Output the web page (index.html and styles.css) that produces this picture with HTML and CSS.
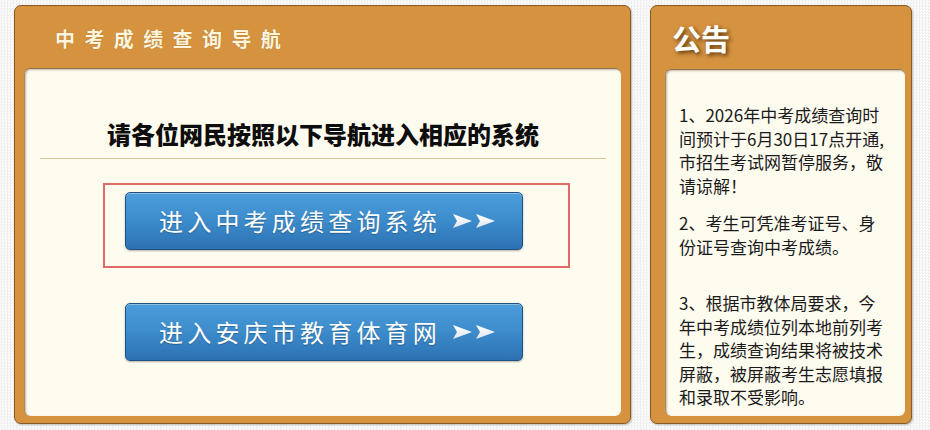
FILE: index.html
```html
<!DOCTYPE html>
<html lang="zh-CN">
<head>
<meta charset="utf-8">
<title>中考成绩查询导航</title>
<link rel="stylesheet" href="styles.css">
</head>
<body>
<div class="wrap">
  <section class="panel nav">
    <div class="nav-head"><h1 class="nav-title">中考成绩查询导航</h1></div>
    <div class="inner nav-inner">
      <h2 class="guide">请各位网民按照以下导航进入相应的系统</h2>
      <div class="rule"></div>
      <div class="highlight">
        <a class="btn" href="#">
          <span class="btn-text">进入中考成绩查询系统</span>
          <svg class="arrows" width="44" height="14" viewBox="0 0 44 14">
            <defs><linearGradient id="ag" x1="0" y1="0" x2="0" y2="1"><stop offset="0" stop-color="#ffffff"/><stop offset="1" stop-color="#dfe6ee"/></linearGradient></defs>
            <polygon points="0,0 19,7 0,14 4,7" fill="url(#ag)"/>
            <polygon points="23,0 42,7 23,14 27,7" fill="url(#ag)"/>
          </svg>
        </a>
      </div>
      <a class="btn btn-second" href="#">
        <span class="btn-text">进入安庆市教育体育网</span>
        <svg class="arrows" width="44" height="14" viewBox="0 0 44 14">
          <polygon points="0,0 19,7 0,14 4,7" fill="url(#ag)"/>
          <polygon points="23,0 42,7 23,14 27,7" fill="url(#ag)"/>
        </svg>
      </a>
    </div>
  </section>
  <section class="panel notice">
    <div class="notice-head"><h1 class="notice-title">公告</h1></div>
    <div class="inner notice-inner">
      <p class="item">1、2026年中考成绩查询时间预计于6月30日17点开通,市招生考试网暂停服务，敬请谅解！</p>
      <p class="item item-2">2、考生可凭准考证号、身份证号查询中考成绩。</p>
      <p class="item item-3">3、根据市教体局要求，今年中考成绩位列本地前列考生，成绩查询结果将被技术屏蔽，被屏蔽考生志愿填报和录取不受影响。</p>
    </div>
  </section>
</div>
</body>
</html>
```
FILE: styles.css
```css
html, body {
  margin: 0;
  padding: 0;
}
body {
  width: 930px;
  height: 430px;
  overflow: hidden;
  background-color: #fbfbfb;
  background-image: repeating-conic-gradient(#efefef 0 25%, #fdfdfd 0 50%);
  background-size: 3px 3px;
  font-family: "Noto Sans CJK SC", "Noto Sans", sans-serif;
}
.wrap {
  display: flex;
  gap: 19px;
  padding: 5px 0 0 14px;
}
.panel {
  box-sizing: border-box;
  height: 419px;
  background: #d5933f;
  border: 1px solid #8b5a22;
  border-radius: 7px;
  display: flex;
  flex-direction: column;
  box-shadow: 1px 1px 2px rgba(0,0,0,0.25);
}
.nav { width: 617px; }
.notice { width: 262px; }

.inner {
  flex: 1;
  background: #fefbef;
  border-radius: 6px;
  border-top: 1px solid #8c7354;
  border-left: 1px solid #a48b6a;
  box-shadow: inset 1px 1px 2px rgba(90,60,20,0.35);
}

.nav-head {
  height: 62px;
  display: flex;
  align-items: center;
  padding-left: 40px;
}
.nav-title {
  margin: 0;
  font-size: 20px;
  font-weight: 700;
  letter-spacing: 9.4px;
  color: #fff5de;
  text-shadow: 0 0 1px rgba(120,70,20,0.6);
  line-height: 24px;
  padding-top: 4px;
}
.nav-inner {
  margin: 0 9px 7px 9px;
  display: flex;
  flex-direction: column;
}
.guide {
  margin: 50px 0 0 0;
  text-align: center;
  font-size: 24px;
  line-height: 30px;
  font-weight: 900;
  color: #0d0d0d;
}
.rule {
  height: 1px;
  background: #d3c397;
  margin: 9px 15px 0 15px;
}
.highlight {
  align-self: flex-start;
  margin: 24px 0 0 78px;
  border: 2px solid #e26a66;
  padding: 7px 45px 16px 20px;
}
.btn {
  box-sizing: border-box;
  width: 398px;
  height: 58px;
  display: flex;
  align-items: center;
  padding-left: 33px;
  border-radius: 5px;
  border: 1px solid #1d5283;
  background: linear-gradient(#4c9edb 0%, #3e8dcd 45%, #2c72b3 100%);
  box-shadow: inset 0 1px 0 rgba(255,255,255,0.35), 0 1px 2px rgba(0,0,0,0.3);
  text-decoration: none;
}
.btn-text {
  color: #ffffff;
  font-size: 24px;
  letter-spacing: 4.2px;
  line-height: 30px;
  text-shadow: 0 1px 1px rgba(0,0,0,0.25);
}
.arrows {
  margin-left: 12px;
}
.btn-second {
  margin: 35px 0 0 100px;
}

.notice-head {
  height: 63px;
  display: flex;
  align-items: center;
  padding-left: 21px;
}
.notice-title {
  margin: 0;
  font-size: 29px;
  font-weight: 700;
  color: #ffffff;
  line-height: 34px;
  text-shadow: 2px 2px 4px rgba(60,30,0,0.8);
}
.notice-inner {
  margin: 0 6px 7px 14px;
  padding: 33px 0 0 13px;
}
.item {
  margin: 0;
  width: 210px;
  font-size: 17px;
  line-height: 23.5px;
  color: #1a1a1a;
}
.item-2 { margin-top: 14px; }
.item-3 { margin-top: 33px; }
```
